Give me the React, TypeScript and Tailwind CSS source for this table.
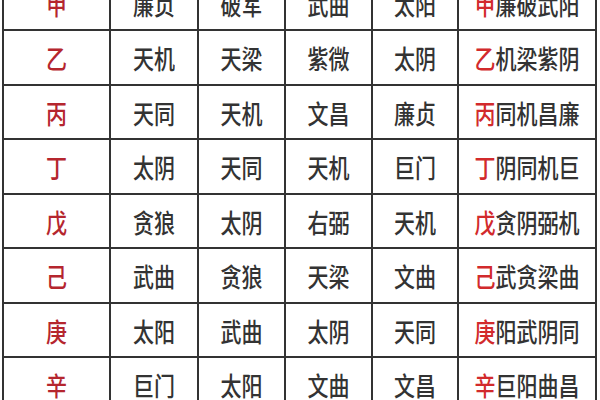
const rows: string[][] = [
  ['甲', '廉贞', '破军', '武曲', '太阳', '廉破武阳'],
  ['乙', '天机', '天梁', '紫微', '太阴', '机梁紫阴'],
  ['丙', '天同', '天机', '文昌', '廉贞', '同机昌廉'],
  ['丁', '太阴', '天同', '天机', '巨门', '阴同机巨'],
  ['戊', '贪狼', '太阴', '右弼', '天机', '贪阴弼机'],
  ['己', '武曲', '贪狼', '天梁', '文曲', '武贪梁曲'],
  ['庚', '太阳', '武曲', '太阴', '天同', '阳武阴同'],
  ['辛', '巨门', '太阳', '文曲', '文昌', '巨阳曲昌'],
]

function Cell({ children }: { children: React.ReactNode }) {
  return (
    <div className="flex items-center justify-center bg-white pt-[3px]">
      <span className="inline-block scale-y-[1.22] text-[21px] leading-none font-medium text-[#333]">{children}</span>
    </div>
  )
}

export default function App() {
  return (
    <div
      className="h-[400px] w-[600px] overflow-hidden bg-white"
      style={{ fontFamily: '"Noto Sans CJK SC", "Noto Sans", sans-serif' }}
    >
      <div className="mt-[-25.5px] ml-[2px] grid w-[595px] auto-rows-[52.5px] grid-cols-[105px_86px_85px_85px_84px_136px] gap-[2px] border-2 border-[#333] bg-[#333]">
        {rows.map((r) => (
          <div key={r[0]} className="contents">
            <Cell>
              <span className="text-[#b5262e]">{r[0]}</span>
            </Cell>
            <Cell>{r[1]}</Cell>
            <Cell>{r[2]}</Cell>
            <Cell>{r[3]}</Cell>
            <Cell>{r[4]}</Cell>
            <Cell>
              <span className="text-[#d22a2c]">{r[0]}</span>
              {r[5]}
            </Cell>
          </div>
        ))}
      </div>
    </div>
  )
}
